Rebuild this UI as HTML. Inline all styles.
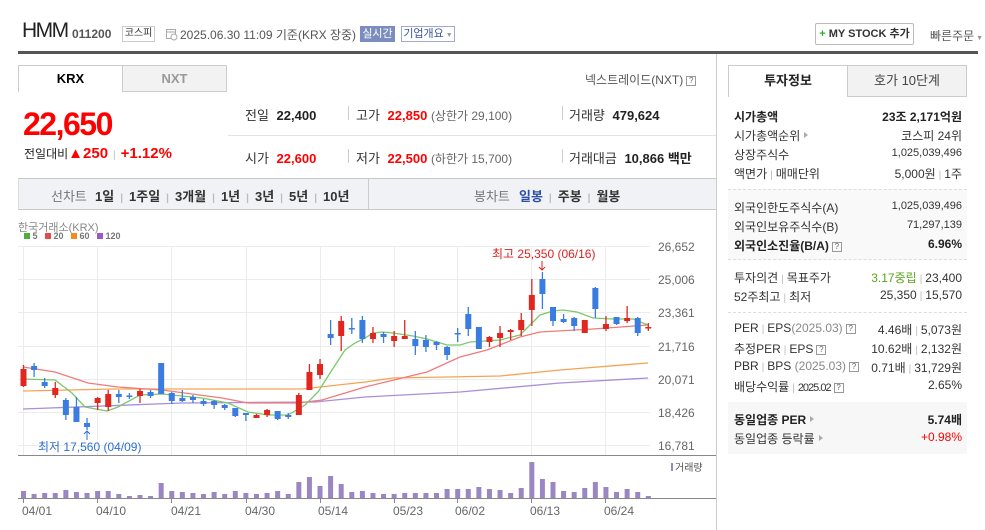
<!DOCTYPE html>
<html><head><meta charset="utf-8">
<style>
*{margin:0;padding:0;box-sizing:border-box}
body{width:985px;height:530px;background:#fff;font-family:"Liberation Sans","Noto Sans CJK KR",sans-serif;color:#333;position:relative;overflow:hidden;font-size:12px}
.a{position:absolute;white-space:nowrap}
.b{font-weight:bold}
.red{color:#f00}
.sep{position:absolute;width:1px;background:#ccc}
.rr{position:absolute;left:734px;width:228px;height:18px;font-size:12px;color:#333}
.rr .v{position:absolute;right:0;top:0}
.q{display:inline-block;width:10px;height:10px;border:1px solid #999;font-size:8px;line-height:8px;text-align:center;color:#666;vertical-align:1px;margin-left:3px}
.tri{display:inline-block;width:0;height:0;border-left:4px solid #aaa;border-top:3px solid transparent;border-bottom:3px solid transparent;margin-left:4px;vertical-align:2px}
.pipe{color:#bbb;margin:0 3px;font-size:10px}
.tb .pipe{margin:0 6px}
</style></head><body>
<!-- header -->
<div class="a" style="left:22px;top:19px;font-size:21px;color:#222;letter-spacing:-1.5px">HMM</div>
<div class="a b" style="left:72px;top:27px;font-size:12px;color:#555">011200</div>
<div class="a" style="left:122px;top:26px;width:33px;height:16px;border:1px solid #ccc;font-size:10px;text-align:center;line-height:14px;color:#333">코스피</div>
<svg class="a" style="left:166px;top:28px" width="12" height="13"><rect x="0.5" y="1.5" width="9" height="9" fill="none" stroke="#aaa"/><line x1="0" y1="4" x2="10" y2="4" stroke="#aaa"/><circle cx="8" cy="9" r="3" fill="#fff" stroke="#aaa"/></svg>
<div class="a" style="left:180px;top:26px;font-size:12px;color:#555">2025.06.30 11:09 <span style="color:#555">기준(KRX 장중)</span></div>
<div class="a" style="left:360px;top:26px;width:35px;height:16px;background:#7b8dbf;color:#fff;font-size:11px;text-align:center;line-height:16px">실시간</div>
<div class="a" style="left:401px;top:26px;width:54px;height:16px;border:1px solid #9fabd0;color:#3d55a0;font-size:11px;text-align:center;line-height:14px">기업개요<span style="font-size:7px;color:#999"> ▼</span></div>
<div class="a" style="left:815px;top:23px;width:99px;height:22px;border:1px solid #bbb;border-radius:2px;font-size:11px;font-weight:bold;color:#333;line-height:20px;text-align:center"><span style="color:#3a3">+</span> MY STOCK 추가</div>
<div class="a" style="left:930px;top:27px;font-size:12px;color:#555">빠른주문<span style="font-size:7px;color:#999"> ▼</span></div>
<div class="a" style="left:18px;top:51px;width:960px;height:3px;background:#555"></div>

<!-- left tabs -->
<div class="a" style="left:18px;top:65px;width:105px;height:27px;border:1px solid #ccc;border-bottom:none;background:#fff;text-align:center;line-height:26px;font-size:13px;font-weight:bold;color:#000">KRX</div>
<div class="a" style="left:122px;top:65px;width:105px;height:27px;border:1px solid #ccc;background:#f2f2f2;text-align:center;line-height:25px;font-size:13px;font-weight:bold;color:#999">NXT</div>
<div class="a" style="left:585px;top:71px;font-size:12px;color:#555">넥스트레이드(NXT)<span class="q">?</span></div>

<!-- price -->
<div class="a b red" style="left:23px;top:106px;font-size:32px;letter-spacing:-1.5px">22,650</div>
<div class="a" style="left:24px;top:145px;font-size:12px;color:#222">전일대비<span class="red b" style="font-size:15px">▲250</span><span class="pipe" style="margin:0 5px">|</span><span class="red b" style="font-size:15px">+1.12%</span></div>

<div class="a" style="left:228px;top:135px;width:488px;height:1px;background:#e3e3e3"></div>
<div class="a" style="left:245px;top:105px;font-size:13px">전일 <span class="b" style="color:#222;margin-left:4px">22,400</span></div>
<div class="sep" style="left:348px;top:106px;height:14px"></div>
<div class="a" style="left:356px;top:105px;font-size:13px">고가 <span class="b red" style="margin-left:4px">22,850</span> <span style="color:#666;font-size:12px">(상한가 29,100)</span></div>
<div class="sep" style="left:562px;top:106px;height:14px"></div>
<div class="a" style="left:569px;top:105px;font-size:13px">거래량 <span class="b" style="color:#222;margin-left:4px">479,624</span></div>
<div class="a" style="left:245px;top:148px;font-size:13px">시가 <span class="b red" style="margin-left:4px">22,600</span></div>
<div class="sep" style="left:348px;top:149px;height:14px"></div>
<div class="a" style="left:356px;top:148px;font-size:13px">저가 <span class="b red" style="margin-left:4px">22,500</span> <span style="color:#666;font-size:12px">(하한가 15,700)</span></div>
<div class="sep" style="left:562px;top:149px;height:14px"></div>
<div class="a" style="left:569px;top:148px;font-size:13px">거래대금 <span class="b" style="color:#222;margin-left:4px">10,866 백만</span></div>

<!-- toolbar -->
<div class="a" style="left:18px;top:178px;width:699px;height:32px;background:#f1f2f6;border-top:1px solid #c8c8c8;border-bottom:1px solid #c8c8c8;border-left:1px solid #ddd"></div>
<div class="a" style="left:368px;top:179px;width:1px;height:30px;background:#ccc"></div>
<div class="a" style="left:51px;top:186px;font-size:13px;color:#777">선차트</div>
<div class="a b tb" style="left:95px;top:186px;font-size:13px;color:#333">1일<span class="pipe">|</span>1주일<span class="pipe">|</span>3개월<span class="pipe">|</span>1년<span class="pipe">|</span>3년<span class="pipe">|</span>5년<span class="pipe">|</span>10년</div>
<div class="a" style="left:474px;top:186px;font-size:13px;color:#777">봉차트</div>
<div class="a b tb" style="left:519px;top:186px;font-size:13px;color:#333"><span style="color:#2d4fa8">일봉</span><span class="pipe">|</span>주봉<span class="pipe">|</span>월봉</div>

<!-- left column right border -->
<div class="a" style="left:716px;top:54px;width:1px;height:476px;background:#ccc"></div>

<!-- chart -->
<div class="a" style="left:18px;top:219px;font-size:11px;color:#888">한국거래소(KRX)</div>
<div class="a" style="left:24px;top:231px;font-size:9px;font-weight:bold;color:#777">
<span style="display:inline-block;width:6px;height:6px;background:#4caf3c"></span> 5 &nbsp;
<span style="display:inline-block;width:6px;height:6px;background:#e84a4a"></span> 20 &nbsp;
<span style="display:inline-block;width:6px;height:6px;background:#f58a1f"></span> 60 &nbsp;
<span style="display:inline-block;width:6px;height:6px;background:#9b59c6"></span> 120</div>
<svg id="ch" class="a" style="left:0;top:0" width="716" height="530">
<g stroke="#ececec" stroke-width="1">
<line x1="18" y1="246.5" x2="650" y2="246.5"/><line x1="18" y1="279.5" x2="650" y2="279.5"/><line x1="18" y1="312.5" x2="650" y2="312.5"/><line x1="18" y1="346.5" x2="650" y2="346.5"/><line x1="18" y1="379.5" x2="650" y2="379.5"/><line x1="18" y1="412.5" x2="650" y2="412.5"/><line x1="18" y1="445.5" x2="650" y2="445.5"/>
<line x1="23.5" y1="246" x2="23.5" y2="455"/><line x1="97.5" y1="246" x2="97.5" y2="455"/><line x1="171.5" y1="246" x2="171.5" y2="455"/><line x1="246.5" y1="246" x2="246.5" y2="455"/><line x1="320.5" y1="246" x2="320.5" y2="455"/><line x1="394.5" y1="246" x2="394.5" y2="455"/><line x1="457.5" y1="246" x2="457.5" y2="455"/><line x1="531.5" y1="246" x2="531.5" y2="455"/><line x1="605.5" y1="246" x2="605.5" y2="455"/>
</g>
<line x1="18" y1="455.5" x2="716" y2="455.5" stroke="#888"/>
<line x1="18" y1="498.5" x2="716" y2="498.5" stroke="#888"/>
<g stroke="#888"><line x1="23.5" y1="498" x2="23.5" y2="503"/><line x1="97.5" y1="498" x2="97.5" y2="503"/><line x1="171.5" y1="498" x2="171.5" y2="503"/><line x1="246.5" y1="498" x2="246.5" y2="503"/><line x1="320.5" y1="498" x2="320.5" y2="503"/><line x1="394.5" y1="498" x2="394.5" y2="503"/><line x1="457.5" y1="498" x2="457.5" y2="503"/><line x1="531.5" y1="498" x2="531.5" y2="503"/><line x1="605.5" y1="498" x2="605.5" y2="503"/></g>
<g font-size="12" fill="#666" font-family="Liberation Sans, sans-serif">
<text x="658" y="251">26,652</text><text x="658" y="284">25,006</text><text x="658" y="317">23,361</text><text x="658" y="351">21,716</text><text x="658" y="384">20,071</text><text x="658" y="417">18,426</text><text x="658" y="450">16,781</text>
</g>
<g font-size="12" fill="#666" font-family="Liberation Sans, sans-serif" text-anchor="middle">
<text x="37" y="515">04/01</text><text x="111" y="515">04/10</text><text x="186" y="515">04/21</text><text x="260" y="515">04/30</text><text x="333" y="515">05/14</text><text x="408" y="515">05/23</text><text x="470" y="515">06/02</text><text x="545" y="515">06/13</text><text x="619" y="515">06/24</text>
</g>
<g fill="none" stroke-width="1.3">
<polyline stroke="#a98ed8" points="23,409 182,403 315,402 365,397 460,392 560,383 648,378"/>
<polyline stroke="#f7a354" points="23,391 115,389 302,389 365,382 393,378 500,376 560,370 648,363"/>
<polyline stroke="#f07b7b" points="23,367 55,372 88,383 118,387 162,390 222,398 248,403 298,403 322,400 365,387 427,372 460,357 487,350 520,337 540,332 593,329 648,325"/>
<polyline stroke="#7cc86a" points="23,379 55,380 72,393 85,407 107,411 118,407 140,395 162,394 202,398 228,403 248,412 268,415 288,415 305,405 318,392 332,370 345,350 355,343 365,338 373,333 383,332 393,333 413,336 427,339 447,345 460,345 470,342 500,340 520,335 540,315 553,311 563,310 577,312 593,318 613,319 633,319 648,325"/>
</g>
<g id="cd"></g>
<g font-size="12" font-family="Liberation Sans, Noto Sans CJK KR, sans-serif">
<text x="492" y="258" fill="#e0201f">최고 25,350 (06/16)</text>
<text x="38" y="451" fill="#2d6fd0">최저 17,560 (04/09)</text>
</g>
<path d="M542 261 V270 M539 267 L542 270 L545 267" stroke="#e0201f" fill="none"/>
<path d="M87 440 V431 M84 434 L87 431 L90 434" stroke="#2d6fd0" fill="none"/>
<rect x="671" y="463" width="2" height="8" fill="#9b86c4"/>
<text x="675" y="471" font-size="10" fill="#555" font-family="Noto Sans CJK KR, sans-serif">거래량</text>
</svg>

<!-- right panel -->
<div class="a" style="left:728px;top:65px;width:120px;height:32px;border:1px solid #ccc;border-bottom:none;background:#fff;text-align:center;line-height:30px;font-size:13px;font-weight:bold;color:#222">투자정보</div>
<div class="a" style="left:847px;top:65px;width:120px;height:32px;border:1px solid #ccc;background:#f2f2f2;text-align:center;line-height:30px;font-size:13px;color:#444">호가 10단계</div>
<div class="a" style="left:728px;top:189px;width:239px;height:71px;background:#f9f9f9;border-top:1px dashed #ddd;border-bottom:1px dashed #ddd"></div>
<div class="a" style="left:728px;top:312px;width:239px;height:1px;border-top:1px dashed #ddd"></div>
<div class="a" style="left:728px;top:402px;width:239px;height:52px;background:#f7f7f7"></div>

<div class="rr" style="top:108px"><b style="color:#222">시가총액</b><span class="v b" style="color:#222">23조 2,171억원</span></div>
<div class="rr" style="top:127px">시가총액순위<span class="tri"></span><span class="v">코스피 24위</span></div>
<div class="rr" style="top:146px">상장주식수<span class="v" style="font-size:11px;top:1px">1,025,039,496</span></div>
<div class="rr" style="top:165px">액면가<span class="pipe">|</span>매매단위<span class="v">5,000원<span class="pipe">|</span>1주</span></div>
<div class="rr" style="top:199px">외국인한도주식수(A)<span class="v" style="font-size:11px;top:1px">1,025,039,496</span></div>
<div class="rr" style="top:218px">외국인보유주식수(B)<span class="v" style="font-size:11px;top:1px">71,297,139</span></div>
<div class="rr" style="top:237px"><b style="color:#222">외국인소진율(B/A)</b><span class="q">?</span><span class="v b" style="color:#222">6.96%</span></div>
<div class="rr" style="top:269px">투자의견<span class="pipe">|</span>목표주가<span class="v"><span style="color:#5aa41e">3.17중립</span><span class="pipe">|</span>23,400</span></div>
<div class="rr" style="top:288px">52주최고<span class="pipe">|</span>최저<span class="v">25,350<span class="pipe">|</span>15,570</span></div>
<div class="rr" style="top:321px">PER<span class="pipe">|</span>EPS<span style="color:#888">(2025.03)</span><span class="q">?</span><span class="v">4.46배<span class="pipe">|</span>5,073원</span></div>
<div class="rr" style="top:340px">추정PER<span class="pipe">|</span>EPS<span class="q">?</span><span class="v">10.62배<span class="pipe">|</span>2,132원</span></div>
<div class="rr" style="top:359px">PBR<span class="pipe">|</span>BPS <span style="color:#888">(2025.03)</span><span class="q">?</span><span class="v">0.71배<span class="pipe">|</span>31,729원</span></div>
<div class="rr" style="top:378px">배당수익률<span class="pipe">|</span><span style="font-size:11px;letter-spacing:-1px">2025.02</span><span class="q">?</span><span class="v">2.65%</span></div>
<div class="rr" style="top:411px"><b style="color:#222">동일업종 PER</b><span class="tri"></span><span class="v b" style="color:#222">5.74배</span></div>
<div class="rr" style="top:430px">동일업종 등락률<span class="tri"></span><span class="v red">+0.98%</span></div>

<script>
var C=[
['r',369,386,365,387],['b',366,370,363,377],['b',382,386,378,388],['r',388,395,382,398],['b',400,415,398,420],['b',407,422,397,422],['b',423,427,418,430],['r',398,403,397,410],['r',394,407,390,411],['b',394,397,390,403],
['b',395.5,396.5,393,399],['r',391,396,389,403],['b',392,396,390,398],['b',363,394,363,394],['b',393,401,392,404],['b',398,401,390,402],['b',397,400,395,403],['b',401,404,399,406],['b',401,405,400,409],['b',405,408,404,410],
['b',408,416,408,417],['b',413,415,413,421],['r',415,418,414,418],['r',410,415,409,417],['b',411,419,411,420],['b',415,417,413,419],['r',395,415,393,415],['r',372,390,364,390],['r',364,375,359,379],['b',334,338,320,345],
['r',321,336,316,351],['b',328,329.5,318,334],['b',320,339,316,343],['r',333,339,327,343],['b',334,337,332,343],['r',336,341,331,347],['r',336,339,320,339],['b',339,346,331,355],['b',340,347,335,352],['b',342,345,341,350],
['b',347,355,346,360],['b',333,334.5,328,342],['b',314,329,307,336],['b',327,349,327,349],['r',337,342,336,347],['r',333,338,326,347],['r',330,332,329,340],['r',320,330,313,336],['r',295,310,279,326],['b',279,294,272,309],
['b',307,321,307,326],['b',319,322,314,323],['b',318,326,317,331],['r',320,333,320,333],['b',288,309,287,318],['r',324,329,316,331],['b',317,324,317,325],['r',318,321,306,323],['b',318,333,317,336],['r',327,328,323,331]];
var V=[491,494,493,493,490,492,493,491,491,494,496,495,496,483,491,492,493,494,492,494,491,493,494,493,491,494,482,477,486,476,484,492,491,493,494,494,493,493,493,493,489,489,489,487,489,490,493,488,462,479,482,491,492,488,482,487,492,489,492,496];
var s='';
for(var i=0;i<60;i++){var x=23+i*10.59,c=C[i],col=c[0]=='r'?'#e0261f':'#3b7ce0';
s+='<line x1="'+(x+0.5)+'" x2="'+(x+0.5)+'" y1="'+c[3]+'" y2="'+c[4]+'" stroke="'+col+'" stroke-width="1.3"/>';
var h=Math.max(c[2]-c[1],1.5);s+='<rect x="'+(x-2.5)+'" y="'+c[1]+'" width="6" height="'+h+'" fill="'+col+'"/>';
s+='<rect x="'+(x-2)+'" y="'+V[i]+'" width="5" height="'+(498-V[i])+'" fill="#9b86c4"/>';}
document.getElementById('cd').innerHTML=s;
</script>
</body></html>
